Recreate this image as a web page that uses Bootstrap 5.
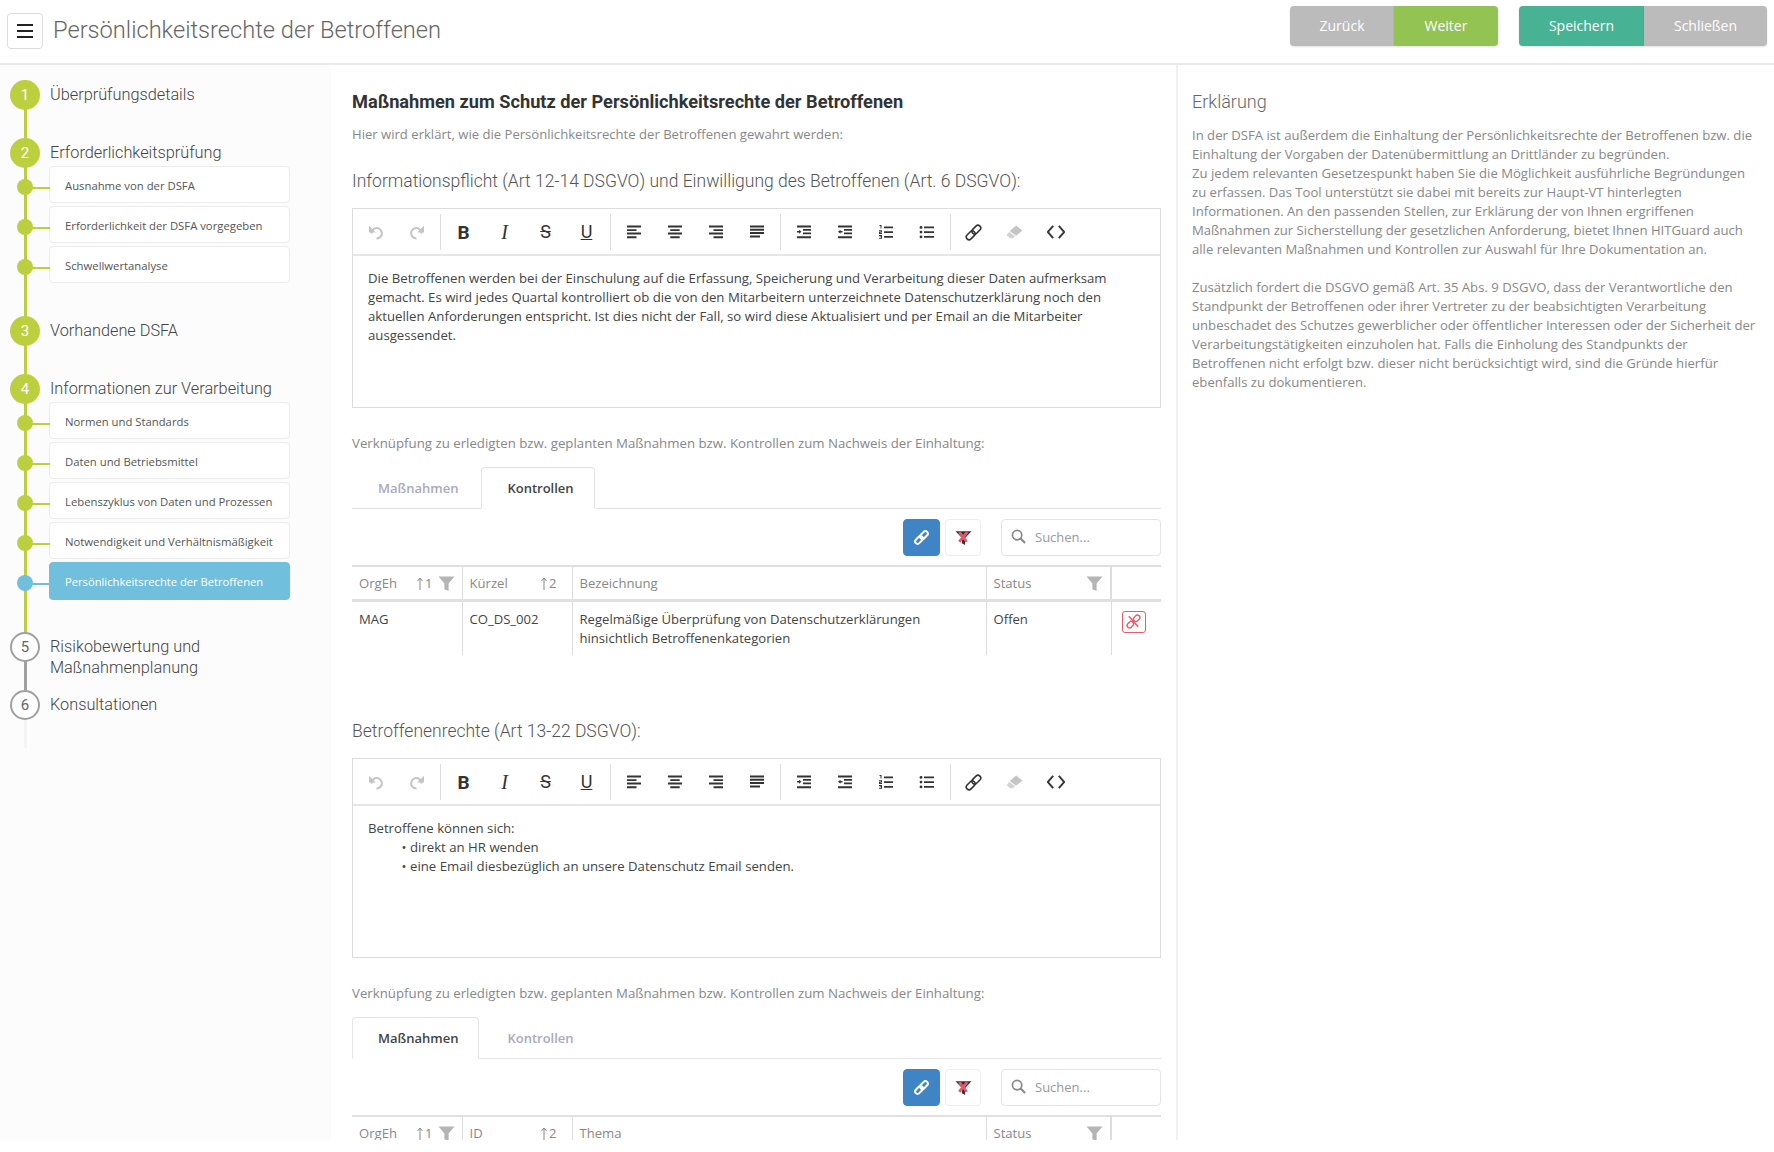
<!DOCTYPE html>
<html lang="de">
<head>
<meta charset="utf-8">
<title>Persönlichkeitsrechte der Betroffenen</title>
<link rel="stylesheet" href="https://cdn.jsdelivr.net/npm/bootstrap@5.3.0/dist/css/bootstrap.min.css">
<style>
html,body{background:#fff;overflow:hidden}
body{font-family:"Open Sans","Liberation Sans",sans-serif;font-size:13.2px;line-height:19px;color:#444}
.app-shell{height:1140px;overflow:hidden;display:flex;flex-direction:column}
.top-bar{height:65px;flex:none;border-bottom:2px solid #e9e9e9;padding:6px 7px 0 7px}
.burger{width:36px;height:36px;margin-top:7px;border:1px solid #ddd;border-radius:4px;background:#fff;padding:0;display:flex;align-items:center;justify-content:center}
.page-title{font-family:Roboto,sans-serif;font-weight:300;font-size:23.65px;line-height:32px;color:#666;margin:8px 0 0 10px}
.head-btn{height:40px;width:104px;border:0;border-radius:0;color:#fff;font-size:14px;box-shadow:0 1px 2px rgba(0,0,0,.12);padding:0 0 2px}
.head-btn.wide{width:125px}
.head-btn.wide2{width:123px}
.tone-grey{background:#bbb}
.tone-lime{background:#92c353}
.tone-teal{background:#47b394}
.head-btn.round-l{border-radius:4px 0 0 4px}
.head-btn.round-r{border-radius:0 4px 4px 0}
.btn-gap{margin-left:21px}
.body-row{flex:1;min-height:0}
.side{width:331px;flex:none;background:#fcfcfc;padding-top:15px}
.step{position:relative;padding-left:50px;min-height:58px;color:#444}
.step::before{content:"";position:absolute;left:24px;top:0;bottom:0;width:3px;background:#bcd03f}
.step.pending::before{background:#a0a0a0}
.step.tail::before{background:#f4f4f4}
.bullet{position:absolute;left:10px;top:0;width:30px;height:30px;border-radius:50%;background:#bcd03f;color:#fff;font-size:15px;display:flex;align-items:center;justify-content:center;font-family:Roboto,sans-serif;z-index:1}
.step.pending .bullet{background:#fff;border:2px solid #a0a0a0;color:#666}
.step-name{font-family:Roboto,sans-serif;font-weight:300;font-size:16.3px;line-height:21px;padding-top:4px;padding-bottom:3px}
.sub-list{margin-left:-1px;width:241px;padding-bottom:30px}
.sub-item{position:relative;height:37px;margin-bottom:3px;background:#fff;border:1px solid #ececec;border-radius:4px;padding:0 0 0 15px;font-size:11.3px;line-height:37px;color:#555;white-space:nowrap}
.sub-item::before{content:"";position:absolute;left:-33px;top:12px;width:16px;height:16px;border-radius:50%;background:#bcd03f}
.sub-item::after{content:"";position:absolute;left:-18px;top:20px;width:18px;height:2px;background:#bcd03f}
.sub-item.on{background:#6fbfdd;border-color:#6fbfdd;color:#fff;height:38px;margin-bottom:2px;font-size:11.2px}
.sub-item.on::before,.sub-item.on::after{background:#6fbfdd}
.center-col{width:845px;flex:none;padding:22px 15px 0 21px;min-width:0}
.block-title{font-family:Roboto,sans-serif;font-weight:700;font-size:18.2px;line-height:30px;color:#333;margin:0}
.hint{color:#888;margin:0}
.intro{margin-top:8px;font-size:13.1px}
.sec-title{font-family:Roboto,sans-serif;font-weight:300;font-size:17.5px;line-height:26px;color:#555;margin:0}
.sec-one{margin-top:24px}
.editor{border:1px solid #ddd;height:200px;margin-top:14px}
.tool-row{height:47px;border-bottom:2px solid #e6e6e6;padding:5px 0 0 2px}
.tool-group{display:flex;padding-right:3px;margin-right:2px;border-right:1px solid #ddd;height:36px}
.tool-group:last-child{border-right:0}
.tool{width:41px;height:36px;display:flex;align-items:center;justify-content:center;color:#333;font-size:18px;line-height:1}
.tool.muted{color:#c4c4c4}
.t-b{font-family:Roboto,sans-serif;font-weight:700;font-size:19px}
.t-i{font-family:"Liberation Serif",serif;font-style:italic;font-size:20px}
.t-s{font-family:Roboto,sans-serif;font-weight:400;text-decoration:line-through}
.t-u{font-family:Roboto,sans-serif;font-weight:400;text-decoration:underline}
.editor-text{padding:13px 15px;color:#444}
.editor-text ul{margin:0;padding-left:42px;list-style-type:"• "}
.link-hint{margin-top:26px;font-size:13.26px}
.tabs-row{margin-top:14px;border-bottom-color:#e4e4e4}
.tabs-row .nav-item{margin-right:2px}
.tabs-row .nav-link{font-family:"Open Sans",sans-serif;font-weight:600;font-size:13px;color:#aab;padding:10px 20px 10px 25px;height:42px;line-height:20px;margin-bottom:-1px;border-radius:4px 4px 0 0}
.tabs-row .nav-link.active{color:#444;border-color:#e4e4e4 #e4e4e4 #fff}
.list-tools{margin-top:10px;height:37px;gap:5px}
.icon-btn{width:36px;height:37px;padding:0;border-radius:4px;display:flex;align-items:center;justify-content:center;border:1px solid #eee;background:#fff}
.icon-btn.blue{width:37px;background:#3f84c4;border-color:#3f84c4}
.search-wrap{width:160px;margin-left:15px;position:relative}
.search-wrap svg{position:absolute;left:10px;top:10px}
.search-wrap .form-control{height:37px;font-size:13px;padding:0 0 2px 33px;border-color:#e4e4e4;border-radius:4px}
.search-wrap .form-control::placeholder{color:#999}
.grid-table{table-layout:fixed;width:809px;margin:9px 0 0;border-top:2px solid #e0e0e0;color:#444}
.grid-table th,.grid-table td{border:0;border-right:1px solid #ddd;padding:6px 7px;font-size:13.1px;line-height:19px;vertical-align:top;background:transparent}
.grid-table th{font-weight:400;color:#888;border-bottom:3px solid #e0e0e0;height:34px;padding-top:7px;padding-bottom:5px;white-space:nowrap}
.grid-table th:nth-child(4){border-right-width:2px}
.grid-table td{padding-top:8px;height:55px}
.grid-table th:last-child,.grid-table td:last-child{border-right:0}
.head-cell{display:flex;align-items:center;justify-content:space-between;height:19px}
.sort-mark{display:inline-flex;align-items:center;gap:1px;color:#888;font-size:13px}
.unlink{width:24px;height:22px;border:1px solid #e35d6a;border-radius:3px;display:flex;align-items:center;justify-content:center;margin:1px 0 0 10px;background:#fff;padding:0}
.sec-two{margin-top:63px}
.note-col{flex:1;border-left:2px solid #f0f0f0;padding:24px 14px 0 14px;min-width:0}
.note-title{font-family:Roboto,sans-serif;font-weight:300;font-size:18px;line-height:26px;color:#666;margin:0 0 11px}
.note-text{color:#888;margin:0 0 19px;font-size:13.13px}
</style>
</head>
<body>
<svg width="0" height="0" class="d-none">
<defs>
<symbol id="i-undo" viewBox="0 0 16 16"><path d="M3.500 9.500A5.200 5.200 0 1 1 8.500 14.500" fill="none" stroke="currentColor" stroke-width="2"/><path d="M1 1.800v6.800h6.800z" fill="currentColor"/></symbol>
<symbol id="i-redo" viewBox="0 0 16 16"><path d="M12.500 9.500A5.200 5.200 0 1 0 7.500 14.500" fill="none" stroke="currentColor" stroke-width="2"/><path d="M15 1.800v6.800H8.200z" fill="currentColor"/></symbol>
<symbol id="i-left" viewBox="0 0 16 16"><path d="M1 1.500h14v2H1zM1 5.200h9.500v1.800H1zM1 8.600h14v2H1zM1 12.300h9.500v2H1z" fill="currentColor"/></symbol>
<symbol id="i-center" viewBox="0 0 16 16"><path d="M1 1.500h14v2H1zM3.300 5.200h9.400v1.800H3.300zM1 8.600h14v2H1zM3.300 12.300h9.400v2H3.300z" fill="currentColor"/></symbol>
<symbol id="i-right" viewBox="0 0 16 16"><path d="M1 1.500h14v2H1zM5.500 5.200H15v1.800H5.500zM1 8.600h14v2H1zM5.500 12.300H15v2H5.500z" fill="currentColor"/></symbol>
<symbol id="i-just" viewBox="0 0 16 16"><path d="M1 1.500h14v2H1zM1 4.800h14v2H1zM1 8.100h14v2H1zM1 11.400h10v2H1z" fill="currentColor"/></symbol>
<symbol id="i-indent" viewBox="0 0 16 16"><path d="M1 1.500h14v2H1zM7 5h8v1.800H7zM7 8.500h8v1.800H7zM1 12.300h14v2H1z" fill="currentColor"/><path d="M5.500 7.800L3 5.800v1.300H1v1.400h2v1.300z" fill="currentColor"/></symbol>
<symbol id="i-outdent" viewBox="0 0 16 16"><path d="M1 1.500h14v2H1zM7 5h8v1.800H7zM7 8.500h8v1.800H7zM1 12.300h14v2H1z" fill="currentColor"/><path d="M1 7.800l2.500-2v1.300h2v1.400h-2v1.300z" fill="currentColor"/></symbol>
<symbol id="i-ol" viewBox="0 0 16 16"><path d="M6 2.500h9v1.800H6zM6 7.200h9v1.800H6zM6 12h9v1.800H6z" fill="currentColor"/><path d="M1.500 1h2v3.600h-1V2H1.500zM1 6.300h3v2.200H2.200v.6H4v.9H1V7.700h2v-.5H1zM1 11h3v3.800H1v-.8h2v-.7H1.500v-.7H3v-.7H1z" fill="currentColor"/></symbol>
<symbol id="i-ul" viewBox="0 0 16 16"><path d="M5 2.500h10v1.800H5zM5 7.200h10v1.800H5zM5 12h10v1.800H5z" fill="currentColor"/><circle cx="2" cy="3.400" r="1.400" fill="currentColor"/><circle cx="2" cy="8.100" r="1.400" fill="currentColor"/><circle cx="2" cy="12.900" r="1.400" fill="currentColor"/></symbol>
<symbol id="i-link" viewBox="0 0 16 16"><g fill="none" stroke="currentColor" stroke-width="1.500" transform="rotate(-45 8 8)"><rect x="-.5" y="5.400" width="9.500" height="5.200" rx="2.600"/><rect x="7" y="5.400" width="9.500" height="5.200" rx="2.600"/></g></symbol>
<symbol id="i-link-bold" viewBox="0 0 16 16"><g fill="none" stroke="currentColor" stroke-width="2.200" transform="rotate(-45 8 8)"><rect x="-.5" y="5.400" width="9.500" height="5.200" rx="2.600"/><rect x="7" y="5.400" width="9.500" height="5.200" rx="2.600"/></g></symbol>
<symbol id="i-erase" viewBox="0 0 16 16"><path d="M9.500 1.500L15.500 6 9.500 11 3.500 6.500z" fill="currentColor"/><path d="M3 7.200l5.500 4.300-2 1.800H3.800L.6 10.500z" fill="currentColor" opacity=".75"/></symbol>
<symbol id="i-code" viewBox="0 0 16 16"><path d="M5.500 2.500L.8 8l4.700 5.500M10.500 2.500L15.200 8l-4.700 5.500" fill="none" stroke="currentColor" stroke-width="1.700"/></symbol>
<symbol id="i-filter" viewBox="0 0 16 16"><path d="M.5 1.500h15L10 8v7L6 13.500V8z" fill="currentColor"/></symbol>
<symbol id="i-clear" viewBox="0 0 16 16"><path d="M.5 2h15L9.500 8.500V15L6.500 13.500V8.500z" fill="#333"/><path d="M4 3l7 9M11.500 3L4 12" stroke="#e8566a" stroke-width="2.600"/></symbol>
<symbol id="i-search" viewBox="0 0 16 16"><circle cx="6.500" cy="6.500" r="5" fill="none" stroke="currentColor" stroke-width="1.800"/><path d="M10.200 10.200L15 15" stroke="currentColor" stroke-width="2.200"/></symbol>
<symbol id="i-unlink" viewBox="0 0 16 16"><g fill="none" stroke="currentColor" stroke-width="1.500" transform="rotate(-45 8 8)"><rect x="-.5" y="5.400" width="7.500" height="5.200" rx="2.600"/><rect x="9" y="5.400" width="7.500" height="5.200" rx="2.600"/></g><path d="M3 2.500l10 11" stroke="currentColor" stroke-width="1.600"/></symbol>
</defs>
</svg>

<div class="app-shell">
  <header class="top-bar d-flex">
    <button class="burger" type="button" aria-label="Menü"><svg width="16" height="14" viewBox="0 0 16 14"><path d="M0 1h16M0 7h16M0 13h16" stroke="#222" stroke-width="2"/></svg></button>
    <h1 class="page-title">Persönlichkeitsrechte der Betroffenen</h1>
    <div class="ms-auto d-flex">
      <button class="head-btn tone-grey round-l" type="button">Zurück</button>
      <button class="head-btn tone-lime round-r" type="button">Weiter</button>
      <button class="head-btn wide tone-teal round-l btn-gap" type="button">Speichern</button>
      <button class="head-btn wide2 tone-grey round-r" type="button">Schließen</button>
    </div>
  </header>
  <div class="body-row d-flex">
    <aside class="side">
      <div class="step"><span class="bullet">1</span><div class="step-name">Überprüfungsdetails</div></div>
      <div class="step"><span class="bullet">2</span><div class="step-name">Erforderlichkeitsprüfung</div>
        <div class="sub-list">
          <div class="sub-item">Ausnahme von der DSFA</div>
          <div class="sub-item">Erforderlichkeit der DSFA vorgegeben</div>
          <div class="sub-item">Schwellwertanalyse</div>
        </div>
      </div>
      <div class="step"><span class="bullet">3</span><div class="step-name">Vorhandene DSFA</div></div>
      <div class="step"><span class="bullet">4</span><div class="step-name">Informationen zur Verarbeitung</div>
        <div class="sub-list">
          <div class="sub-item">Normen und Standards</div>
          <div class="sub-item">Daten und Betriebsmittel</div>
          <div class="sub-item">Lebenszyklus von Daten und Prozessen</div>
          <div class="sub-item">Notwendigkeit und Verhältnismäßigkeit</div>
          <div class="sub-item on">Persönlichkeitsrechte der Betroffenen</div>
        </div>
      </div>
      <div class="step pending"><span class="bullet">5</span><div class="step-name">Risikobewertung und<br>Maßnahmenplanung</div></div>
      <div class="step pending tail"><span class="bullet">6</span><div class="step-name">Konsultationen</div></div>
    </aside>

    <main class="center-col">
      <h2 class="block-title">Maßnahmen zum Schutz der Persönlichkeitsrechte der Betroffenen</h2>
      <p class="hint intro">Hier wird erklärt, wie die Persönlichkeitsrechte der Betroffenen gewahrt werden:</p>

      <h3 class="sec-title sec-one">Informationspflicht (Art 12-14 DSGVO) und Einwilligung des Betroffenen (Art. 6 DSGVO):</h3>
      <div class="editor">
        <div class="tool-row d-flex">
          <div class="tool-group"><span class="tool muted"><svg width="16" height="16"><use href="#i-undo"/></svg></span><span class="tool muted"><svg width="16" height="16"><use href="#i-redo"/></svg></span></div>
          <div class="tool-group"><span class="tool t-b">B</span><span class="tool t-i">I</span><span class="tool t-s">S</span><span class="tool t-u">U</span></div>
          <div class="tool-group"><span class="tool"><svg width="16" height="16"><use href="#i-left"/></svg></span><span class="tool"><svg width="16" height="16"><use href="#i-center"/></svg></span><span class="tool"><svg width="16" height="16"><use href="#i-right"/></svg></span><span class="tool"><svg width="16" height="16"><use href="#i-just"/></svg></span></div>
          <div class="tool-group"><span class="tool"><svg width="16" height="16"><use href="#i-indent"/></svg></span><span class="tool"><svg width="16" height="16"><use href="#i-outdent"/></svg></span><span class="tool"><svg width="16" height="16"><use href="#i-ol"/></svg></span><span class="tool"><svg width="16" height="16"><use href="#i-ul"/></svg></span></div>
          <div class="tool-group"><span class="tool"><svg width="17" height="17"><use href="#i-link"/></svg></span><span class="tool muted"><svg width="17" height="17"><use href="#i-erase"/></svg></span><span class="tool"><svg width="18" height="18"><use href="#i-code"/></svg></span></div>
        </div>
        <div class="editor-text">Die Betroffenen werden bei der Einschulung auf die Erfassung, Speicherung und Verarbeitung dieser Daten aufmerksam gemacht. Es wird jedes Quartal kontrolliert ob die von den Mitarbeitern unterzeichnete Datenschutzerklärung noch den aktuellen Anforderungen entspricht. Ist dies nicht der Fall, so wird diese Aktualisiert und per Email an die Mitarbeiter ausgessendet.</div>
      </div>
      <p class="hint link-hint">Verknüpfung zu erledigten bzw. geplanten Maßnahmen bzw. Kontrollen zum Nachweis der Einhaltung:</p>
      <ul class="nav nav-tabs tabs-row">
        <li class="nav-item"><a class="nav-link" href="#">Maßnahmen</a></li>
        <li class="nav-item"><a class="nav-link active" href="#">Kontrollen</a></li>
      </ul>
      <div class="list-tools d-flex justify-content-end">
        <button class="icon-btn blue" type="button" aria-label="Verknüpfen"><svg width="15" height="15" color="#fff"><use href="#i-link-bold"/></svg></button>
        <button class="icon-btn" type="button" aria-label="Filter löschen"><svg width="17" height="17"><use href="#i-clear"/></svg></button>
        <div class="search-wrap"><svg width="15" height="15" color="#888"><use href="#i-search"/></svg><input class="form-control" type="text" placeholder="Suchen..."></div>
      </div>
      <table class="table grid-table">
        <colgroup><col style="width:110px"><col style="width:110px"><col style="width:414px"><col style="width:125px"><col style="width:50px"></colgroup>
        <thead><tr>
          <th><div class="head-cell"><span>OrgEh</span><span class="sort-mark"><svg width="8" height="14" viewBox="0 0 8 14"><path d="M4 13V1M1.500 4L4 1l2.500 3" fill="none" stroke="#888"/></svg>1<svg class="ms-1" width="17" height="17" color="#b5b5b5"><use href="#i-filter"/></svg></span></div></th>
          <th><div class="head-cell"><span>Kürzel</span><span class="sort-mark me-2"><svg width="8" height="14" viewBox="0 0 8 14"><path d="M4 13V1M1.500 4L4 1l2.500 3" fill="none" stroke="#888"/></svg>2</span></div></th>
          <th>Bezeichnung</th>
          <th><div class="head-cell"><span>Status</span><svg width="17" height="17" color="#b5b5b5"><use href="#i-filter"/></svg></div></th>
          <th></th>
        </tr></thead>
        <tbody><tr>
          <td>MAG</td><td>CO_DS_002</td><td>Regelmäßige Überprüfung von Datenschutzerklärungen hinsichtlich Betroffenenkategorien</td><td>Offen</td>
          <td class="px-0"><button class="unlink" type="button" aria-label="Lösen"><svg width="15" height="15" color="#e35d6a"><use href="#i-unlink"/></svg></button></td>
        </tr></tbody>
      </table>

      <h3 class="sec-title sec-two">Betroffenenrechte (Art 13-22 DSGVO):</h3>
      <div class="editor">
        <div class="tool-row d-flex">
          <div class="tool-group"><span class="tool muted"><svg width="16" height="16"><use href="#i-undo"/></svg></span><span class="tool muted"><svg width="16" height="16"><use href="#i-redo"/></svg></span></div>
          <div class="tool-group"><span class="tool t-b">B</span><span class="tool t-i">I</span><span class="tool t-s">S</span><span class="tool t-u">U</span></div>
          <div class="tool-group"><span class="tool"><svg width="16" height="16"><use href="#i-left"/></svg></span><span class="tool"><svg width="16" height="16"><use href="#i-center"/></svg></span><span class="tool"><svg width="16" height="16"><use href="#i-right"/></svg></span><span class="tool"><svg width="16" height="16"><use href="#i-just"/></svg></span></div>
          <div class="tool-group"><span class="tool"><svg width="16" height="16"><use href="#i-indent"/></svg></span><span class="tool"><svg width="16" height="16"><use href="#i-outdent"/></svg></span><span class="tool"><svg width="16" height="16"><use href="#i-ol"/></svg></span><span class="tool"><svg width="16" height="16"><use href="#i-ul"/></svg></span></div>
          <div class="tool-group"><span class="tool"><svg width="17" height="17"><use href="#i-link"/></svg></span><span class="tool muted"><svg width="17" height="17"><use href="#i-erase"/></svg></span><span class="tool"><svg width="18" height="18"><use href="#i-code"/></svg></span></div>
        </div>
        <div class="editor-text">Betroffene können sich:<ul><li>direkt an HR wenden</li><li>eine Email diesbezüglich an unsere Datenschutz Email senden.</li></ul></div>
      </div>
      <p class="hint link-hint">Verknüpfung zu erledigten bzw. geplanten Maßnahmen bzw. Kontrollen zum Nachweis der Einhaltung:</p>
      <ul class="nav nav-tabs tabs-row">
        <li class="nav-item"><a class="nav-link active" href="#">Maßnahmen</a></li>
        <li class="nav-item"><a class="nav-link" href="#">Kontrollen</a></li>
      </ul>
      <div class="list-tools d-flex justify-content-end">
        <button class="icon-btn blue" type="button" aria-label="Verknüpfen"><svg width="15" height="15" color="#fff"><use href="#i-link-bold"/></svg></button>
        <button class="icon-btn" type="button" aria-label="Filter löschen"><svg width="17" height="17"><use href="#i-clear"/></svg></button>
        <div class="search-wrap"><svg width="15" height="15" color="#888"><use href="#i-search"/></svg><input class="form-control" type="text" placeholder="Suchen..."></div>
      </div>
      <table class="table grid-table">
        <colgroup><col style="width:110px"><col style="width:110px"><col style="width:414px"><col style="width:125px"><col style="width:50px"></colgroup>
        <thead><tr>
          <th><div class="head-cell"><span>OrgEh</span><span class="sort-mark"><svg width="8" height="14" viewBox="0 0 8 14"><path d="M4 13V1M1.500 4L4 1l2.500 3" fill="none" stroke="#888"/></svg>1<svg class="ms-1" width="17" height="17" color="#b5b5b5"><use href="#i-filter"/></svg></span></div></th>
          <th><div class="head-cell"><span>ID</span><span class="sort-mark me-2"><svg width="8" height="14" viewBox="0 0 8 14"><path d="M4 13V1M1.500 4L4 1l2.500 3" fill="none" stroke="#888"/></svg>2</span></div></th>
          <th>Thema</th>
          <th><div class="head-cell"><span>Status</span><svg width="17" height="17" color="#b5b5b5"><use href="#i-filter"/></svg></div></th>
          <th></th>
        </tr></thead>
      </table>
    </main>

    <section class="note-col">
      <h3 class="note-title">Erklärung</h3>
      <p class="note-text">In der DSFA ist außerdem die Einhaltung der Persönlichkeitsrechte der Betroffenen bzw. die Einhaltung der Vorgaben der Datenübermittlung an Drittländer zu begründen.<br>Zu jedem relevanten Gesetzespunkt haben Sie die Möglichkeit ausführliche Begründungen zu erfassen. Das Tool unterstützt sie dabei mit bereits zur Haupt-VT hinterlegten Informationen. An den passenden Stellen, zur Erklärung der von Ihnen ergriffenen Maßnahmen zur Sicherstellung der gesetzlichen Anforderung, bietet Ihnen HITGuard auch alle relevanten Maßnahmen und Kontrollen zur Auswahl für Ihre Dokumentation an.</p>
      <p class="note-text">Zusätzlich fordert die DSGVO gemäß Art. 35 Abs. 9 DSGVO, dass der Verantwortliche den Standpunkt der Betroffenen oder ihrer Vertreter zu der beabsichtigten Verarbeitung unbeschadet des Schutzes gewerblicher oder öffentlicher Interessen oder der Sicherheit der Verarbeitungstätigkeiten einzuholen hat. Falls die Einholung des Standpunkts der Betroffenen nicht erfolgt bzw. dieser nicht berücksichtigt wird, sind die Gründe hierfür ebenfalls zu dokumentieren.</p>
    </section>
  </div>
</div>
<script src="https://cdn.jsdelivr.net/npm/bootstrap@5.3.0/dist/js/bootstrap.bundle.min.js"></script>
</body>
</html>
